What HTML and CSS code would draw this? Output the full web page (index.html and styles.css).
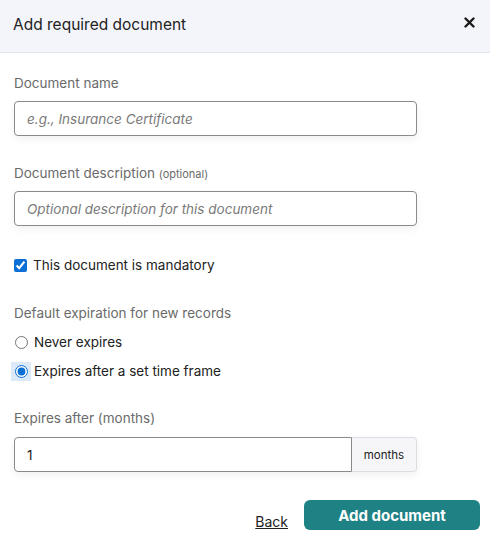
FILE: index.html
```html
<!DOCTYPE html>
<html lang="en">

<head>
    <meta charset="UTF-8">
    <meta name="viewport" content="width=device-width, initial-scale=1.0">
    <title>Add required document</title>
    <link rel="stylesheet" href="styles.css">
</head>

<body>
    <div class="modal">
        <div class="modal-header">
            <h2>Add required document</h2>
            <button class="close" type="button" aria-label="Close">
                <svg width="11" height="11" viewBox="0 0 11 11">
                    <path d="M1.5 1.5 L9.5 9.5 M9.5 1.5 L1.5 9.5" stroke="#1a1a1a" stroke-width="2.4" stroke-linecap="round" />
                </svg>
            </button>
        </div>

        <form class="modal-body" id="form">
            <div class="field">
                <label for="docName">Document name</label>
                <input type="text" id="docName" placeholder="e.g., Insurance Certificate">
            </div>

            <div class="field">
                <label for="docDesc">Document description <small>(optional)</small></label>
                <input type="text" id="docDesc" placeholder="Optional description for this document">
            </div>

            <label class="check">
                <input type="checkbox" checked>
                <span>This document is mandatory</span>
            </label>

            <div class="group">
                <p class="group-title">Default expiration for new records</p>
                <label class="check">
                    <input type="radio" name="expiry">
                    <span>Never expires</span>
                </label>
                <label class="check">
                    <span class="radio-focus"><input type="radio" name="expiry" checked></span>
                    <span>Expires after a set time frame</span>
                </label>
            </div>

            <div class="field months-field">
                <label for="months">Expires after (months)</label>
                <div class="input-group">
                    <input type="text" id="months" value="1">
                    <span class="addon">months</span>
                </div>
            </div>

            <div class="actions">
                <a href="#" class="back">Back</a>
                <button type="submit" class="primary">Add document</button>
            </div>
        </form>
    </div>
</body>

</html>
```

FILE: styles.css
```css
* {
    box-sizing: border-box;
}

body {
    margin: 0;
    font-family: Inter, "Noto Sans", sans-serif;
    background: #fff;
    color: #222;
}

.modal {
    width: 490px;
}

.modal-header {
    height: 53px;
    background: #f4f5fa;
    border-bottom: 1px solid #e3e4ea;
    display: flex;
    align-items: flex-start;
    justify-content: space-between;
    padding: 15px 15px 0 13px;
}

.modal-header h2 {
    margin: 0;
    font-size: 15.5px;
    font-weight: 400;
    color: #222;
}

.close {
    border: 0;
    background: none;
    padding: 0;
    margin-top: 2px;
    display: flex;
}

.modal-body {
    padding: 22px 73px 0 14px;
}

.field {
    margin-bottom: 29px;
}

.field label {
    display: block;
    font-size: 13.5px;
    color: #6b6b6b;
    margin-bottom: 10px;
}

.months-field label {
    margin-bottom: 11px;
}

.field label small {
    font-size: 11px;
}

.field input {
    display: block;
    width: 100%;
    height: 35px;
    border: 1px solid #8a8a8a;
    border-radius: 4px;
    padding: 0 12px;
    font-family: inherit;
    font-size: 13.5px;
    color: #222;
    box-shadow: 0 3px 8px rgba(0, 0, 0, 0.06);
    outline: 0;
}

.field input::placeholder {
    font-style: italic;
    color: #7a7a7a;
}

.check {
    display: flex;
    align-items: center;
    gap: 6px;
    font-size: 13.5px;
    color: #222;
    height: 20px;
}

.check input {
    margin: 0;
    width: 13px;
    height: 13px;
    accent-color: #0b6fd6;
}

.modal-body > .check {
    margin-bottom: 30px;
}

.group {
    margin-bottom: 29px;
}

.group-title {
    margin: 0 0 11px;
    font-size: 13.5px;
    color: #6b6b6b;
}

.group .check {
    margin-bottom: 9px;
}

.group .check input {
    margin-left: 1px;
}

.radio-focus {
    display: flex;
    background: #dce9f8;
    padding: 3px;
    margin: -3px;
}

.radio-focus input {
    margin-left: 1px;
}

.input-group {
    display: flex;
    box-shadow: 0 3px 8px rgba(0, 0, 0, 0.06);
    border-radius: 4px;
}

.input-group input {
    flex: 1;
    border-radius: 4px 0 0 4px;
    box-shadow: none;
}

.addon {
    width: 65px;
    display: flex;
    align-items: center;
    justify-content: center;
    font-size: 11.5px;
    color: #222;
    background: #f6f6f9;
    border: 1px solid #dcdce2;
    border-left: 0;
    border-radius: 0 4px 4px 0;
}

.actions {
    display: flex;
    justify-content: flex-end;
    align-items: center;
    gap: 16px;
    margin-right: -63px;
    margin-top: -1px;
}

.back {
    color: #222;
    font-size: 14px;
    margin-top: 12px;
}

.primary {
    width: 176px;
    height: 30px;
    border: 0;
    border-radius: 6px;
    background: #1e8285;
    color: #fff;
    font-family: inherit;
    font-size: 15px;
    font-weight: 700;
}
```
